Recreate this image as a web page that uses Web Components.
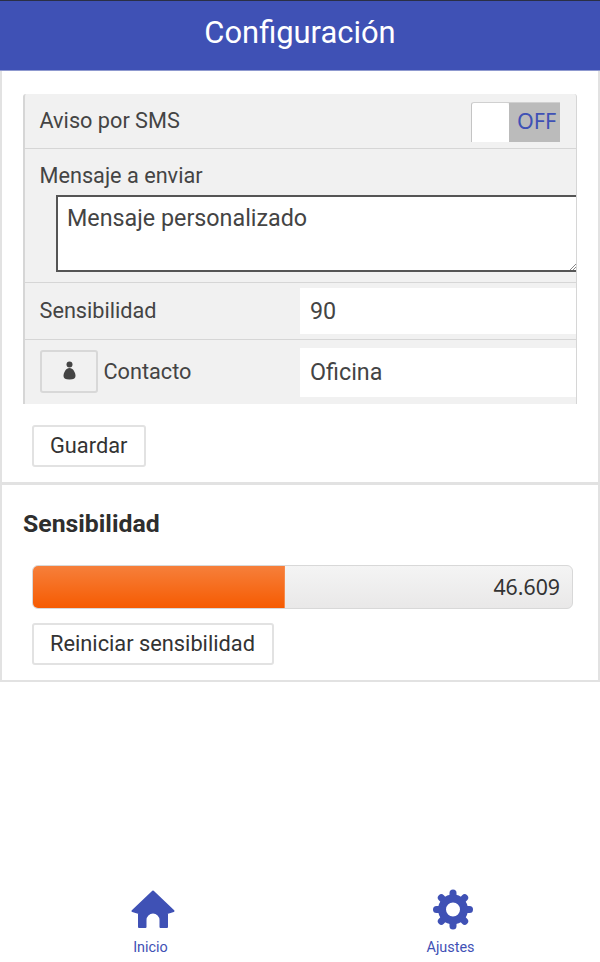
<!DOCTYPE html>
<html lang="es">
<head>
<meta charset="UTF-8">
<title>Configuración</title>
<style>
  html, body { margin: 0; padding: 0; background: #fff; }
  body { font-family: Roboto, sans-serif; color: #444; }
  app-shell form-row > span { display: block; }
</style>
</head>
<body>
<app-shell>
  <app-header slot="header">Configuración</app-header>

  <app-card>
    <form-table>
      <form-row height="54" between>
        <span>Aviso por SMS</span>
        <off-switch></off-switch>
      </form-row>
      <form-row height="133" column>
        <span>Mensaje a enviar</span>
        <text-box>Mensaje personalizado</text-box>
      </form-row>
      <form-row height="56">
        <field-pair label="Sensibilidad" value="90"></field-pair>
      </form-row>
      <form-row height="63" last>
        <field-pair label="Contacto" value="Oficina" icon></field-pair>
      </form-row>
    </form-table>
    <plain-button class="save">Guardar</plain-button>
  </app-card>

  <app-card second>
    <section-title>Sensibilidad</section-title>
    <meter-bar percent="46.8" text="46.609"></meter-bar>
    <plain-button>Reiniciar sensibilidad</plain-button>
  </app-card>

  <tab-bar slot="tabs">
    <tab-item label="Inicio" icon="home"></tab-item>
    <tab-item label="Ajustes" icon="gear"></tab-item>
  </tab-bar>
</app-shell>

<script>
  // small helper so every component has the same shape
  function define(name, html, setup) {
    customElements.define(name, class extends HTMLElement {
      constructor() {
        super();
        this.attachShadow({ mode: 'open' });
        this.shadowRoot.innerHTML = html;
      }
      connectedCallback() {
        if (setup) setup(this, this.shadowRoot);
      }
    });
  }

  define('app-shell', `
    <style>
      :host { display: flex; flex-direction: column; height: 962px; overflow: hidden; }
      .tabs { margin-top: auto; }
    </style>
    <slot name="header"></slot>
    <slot></slot>
    <div class="tabs"><slot name="tabs"></slot></div>
  `);

  define('app-header', `
    <style>
      :host {
        display: block; height: 69px; text-align: center;
        background: #3f51b5; border-top: 1px solid #2a2f45; border-bottom: 1px solid #8f99cf;
        color: #fff; font: 400 30.900px/64px Roboto, sans-serif;
      }
    </style>
    <slot></slot>
  `);

  define('app-card', `
    <style>
      :host {
        display: block; box-sizing: border-box; height: 414px; padding: 23px 21px 0;
        border-left: 2px solid #e2e2e2; border-right: 2px solid #e2e2e2;
        border-bottom: 3px solid #e2e2e2; background: #fff;
      }
      :host([second]) {
        height: 197px; padding-top: 0; border-bottom-width: 2px;
      }
      ::slotted(plain-button.save) { margin: 21px 0 0 9px; }
    </style>
    <slot></slot>
  `);

  define('form-table', `
    <style>
      :host {
        display: block; width: 554px; box-sizing: border-box; background: #f1f1f1;
        border-left: 2px solid #d6d6d6; border-right: 1px solid #d6d6d6; border-radius: 3px 3px 0 0;
      }
    </style>
    <slot></slot>
  `);

  define('form-row', `
    <style>
      :host {
        display: flex; align-items: center; box-sizing: border-box;
        border-bottom: 1px solid #d6d6d6; padding: 0 0 0 14.500px;
        font: 400 21.700px Roboto, sans-serif; color: #444;
      }
      :host([between]) { justify-content: space-between; padding-right: 16px; }
      :host([between]) ::slotted(span) { padding-bottom: 2px; }
      :host([column]) { flex-direction: column; align-items: stretch; padding-top: 14px; }
      :host([last]) { border-bottom: 0; }
    </style>
    <slot></slot>
  `, (el) => {
    el.style.height = (+el.getAttribute('height') + 1) + 'px';
  });

  define('off-switch', `
    <style>
      :host {
        display: flex; width: 89px; height: 40px; box-sizing: border-box; margin-top: 2px;
        border-top: 1px solid #d0d0d0; border-left: 1px solid #c4c4c4; border-radius: 3px 0 0 0;
      }
      .knob { width: 37px; background: #fff; border-radius: 3px 3px 0 0; }
      .off {
        flex: 1; background: #bbb; color: #3f51b5; text-align: center; padding-left: 4px;
        font: 400 21.500px/36px "Noto Sans", sans-serif;
      }
    </style>
    <div class="knob"></div><div class="off">OFF</div>
  `);

  define('text-box', `
    <style>
      :host {
        display: block; height: 77px; margin: 7px 0 0 16.500px; box-sizing: border-box;
        background: #fff; border: 2px solid #555; border-right: 0; position: relative;
        padding: 8px 9px; font: 400 23.300px/26px Roboto, sans-serif; color: #444;
      }
      svg { position: absolute; right: 0; bottom: 0; }
    </style>
    <slot></slot>
    <svg width="7" height="7" viewBox="0 0 7 7"><path d="M1 7L7 1M4 7L7 4" stroke="#888" fill="none"/></svg>
  `);

  define('field-pair', `
    <style>
      :host { display: flex; align-items: center; flex: 1; min-width: 0; height: 100%; }
      .left { display: flex; align-items: center; width: 260.500px; }
      .label { padding-bottom: 2px; }
      .btn {
        display: none; width: 58px; height: 43px; box-sizing: border-box; margin: 0 6px 2px 0;
        border: 2px solid #d8d8d8; border-radius: 3px; align-items: center; justify-content: center;
      }
      :host([icon]) .btn { display: flex; }
      .value {
        flex: 1; height: 46px; box-sizing: border-box; background: #fff; padding-left: 10px;
        font: 400 23.300px/46px Roboto, sans-serif; color: #444;
      }
      :host([icon]) .value { height: 49px; line-height: 49px; }
    </style>
    <div class="left">
      <div class="btn">
        <svg width="14" height="20" viewBox="0 0 14 20"><circle cx="7.500" cy="3.500" r="3" fill="#444"/><path d="M7.500 7C4 7 1.500 11.500 1.500 15 1.500 17.500 3.500 18.500 7.500 18.500s6-1 6-3.500C13.500 11.500 11 7 7.500 7z" fill="#444"/></svg>
      </div>
      <span class="label"></span>
    </div>
    <div class="value"></div>
  `, (el, root) => {
    root.querySelector('.label').textContent = el.getAttribute('label');
    root.querySelector('.value').textContent = el.getAttribute('value');
  });

  define('plain-button', `
    <style>
      :host {
        display: table; box-sizing: border-box; height: 42px; padding: 0 17px 0 16px;
        border: 2px solid #e2e2e2; border-radius: 3px; background: #fff;
        font: 400 21.800px/37px Roboto, sans-serif; color: #333; margin-left: 9px;
      }
    </style>
    <slot></slot>
  `);

  define('section-title', `
    <style>
      :host {
        display: block; height: 80px; font: 700 24.800px/77px Roboto, sans-serif; color: #2e2e2e;
      }
    </style>
    <slot></slot>
  `);

  define('meter-bar', `
    <style>
      :host {
        display: block; position: relative; width: 541px; height: 44px; box-sizing: border-box;
        margin: 0 0 14px 9px; border: 1px solid #d8d8d8; border-radius: 6px;
        background: linear-gradient(#f4f4f4, #e9e8e8); overflow: hidden;
      }
      .fill {
        position: absolute; left: -1px; top: -1px; bottom: -1px;
        background: linear-gradient(#f6803c, #f65a00); border-right: 1px solid #f78a4a;
      }
      .text {
        position: absolute; right: 12px; top: 0; font: 400 21.300px/41px "Noto Sans", sans-serif; color: #333;
      }
    </style>
    <div class="fill"></div><div class="text"></div>
  `, (el, root) => {
    root.querySelector('.fill').style.width = el.getAttribute('percent') + '%';
    root.querySelector('.text').textContent = el.getAttribute('text');
  });

  define('tab-bar', `
    <style>
      :host { display: flex; height: 92px; }
      ::slotted(tab-item) { flex: 1; }
    </style>
    <slot></slot>
  `);

  const gearTeeth = [0, 45, 90, 135, 180, 225, 270, 315]
    .map(a => `<line x1="23" y1="4" x2="23" y2="9" transform="rotate(${a} 23 20.500)"/>`).join('');

  const icons = {
    home: '<path fill="#3f51b5" stroke="#3f51b5" stroke-width="2" stroke-linejoin="round" d="M23 2.500 2.500 22 9 24V38H15.500V31a7.500 7.500 0 0 1 15 0V38H37V24L43.500 22z"/>',
    gear: `<circle cx="23" cy="20.500" r="11" fill="none" stroke="#3f51b5" stroke-width="8"/>
      <g stroke="#3f51b5" stroke-width="7" stroke-linecap="round">${gearTeeth}</g>`
  };

  define('tab-item', `
    <style>
      :host { display: flex; flex-direction: column; align-items: center; padding-top: 19px; box-sizing: border-box; }
      svg { display: block; margin-left: 6px; }
      span { font: 400 14.400px/16px Roboto, sans-serif; color: #3f51b5; margin: 10px 0 0 1px; }
    </style>
    <svg width="46" height="41" viewBox="0 0 46 41"></svg>
    <span></span>
  `, (el, root) => {
    root.querySelector('svg').innerHTML = icons[el.getAttribute('icon')];
    root.querySelector('span').textContent = el.getAttribute('label');
  });
</script>
</body>
</html>
